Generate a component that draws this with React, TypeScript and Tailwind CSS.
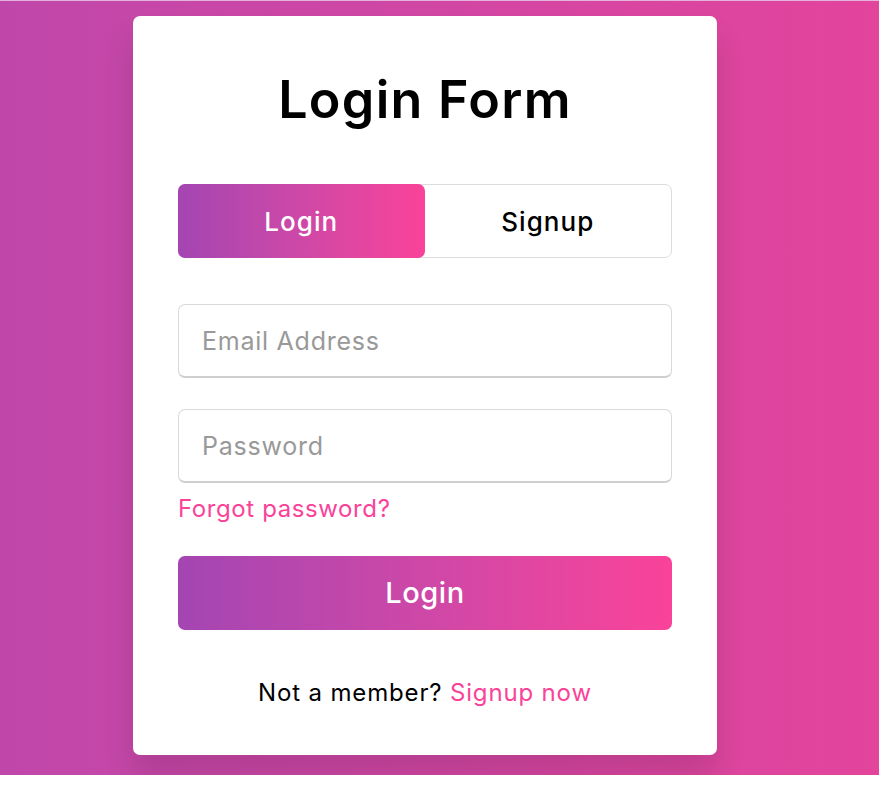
import { useState } from "react";

const font = { fontFamily: "Inter, 'Noto Sans', sans-serif" };

export default function App() {
	const [tab, setTab] = useState<"login" | "signup">("login");

	return (
		<div className="min-h-[786px] bg-white" style={font}>
			<div className="h-[775px] overflow-hidden border-t border-[#e4b3dc] bg-linear-to-r from-[#c047aa] to-[#e3449c] pt-[15px]">
				<div className="ml-[133px] w-[584px] rounded-[7px] bg-white px-[45px] pt-[47px] pb-[44px] shadow-[0_22px_30px_rgba(0,0,0,0.12)]">
					<h1 className="mb-[47px] text-center text-[52px] font-semibold leading-[74px] tracking-[0.025em] text-black">
						Login Form
					</h1>

					<div className="relative flex h-[74px] rounded-[7px] border border-[#dcdcdc]">
						<button
							onClick={() => setTab("login")}
							className={
								tab === "login"
									? "-my-px -ml-px flex-1 rounded-[7px] bg-linear-to-r from-[#a445b2] to-[#fa4299] text-[26px] font-medium tracking-[0.04em] text-white"
									: "flex-1 text-[26px] font-medium tracking-[0.04em] text-black"
							}
						>
							Login
						</button>
						<button
							onClick={() => setTab("signup")}
							className={
								tab === "signup"
									? "-my-px -mr-px flex-1 rounded-[7px] bg-linear-to-r from-[#a445b2] to-[#fa4299] text-[26px] font-medium tracking-[0.04em] text-white"
									: "flex-1 text-[26px] font-medium tracking-[0.04em] text-black"
							}
						>
							Signup
						</button>
					</div>

					<input
						type="text"
						placeholder="Email Address"
						className="mt-[46px] block h-[74px] w-full rounded-[7px] border border-b-2 border-[#d9d9d9] border-b-[#cfcfcf] pl-[23px] text-[25px] tracking-[0.03em] text-black outline-none placeholder:text-[#999]"
					/>
					<input
						type="password"
						placeholder="Password"
						className="mt-[31px] block h-[74px] w-full rounded-[7px] border border-b-2 border-[#d9d9d9] border-b-[#cfcfcf] pl-[23px] text-[25px] tracking-[0.03em] text-black outline-none placeholder:text-[#999]"
					/>
					<div className="mt-[8px] text-[24px] leading-[36px] tracking-[0.025em] text-[#fa4299]">
						<a href="#">Forgot password?</a>
					</div>

					<button className="mt-[29px] block h-[74px] w-full rounded-[7px] bg-linear-to-r from-[#a445b2] to-[#fa4299] text-[29px] font-medium tracking-[0.02em] text-white">
						Login
					</button>

					<p className="mt-[45px] text-center text-[24px] leading-[36px] tracking-[0.035em] text-black">
						Not a member? <a href="#" className="text-[#fa4299]">Signup now</a>
					</p>
				</div>
			</div>
		</div>
	);
}
